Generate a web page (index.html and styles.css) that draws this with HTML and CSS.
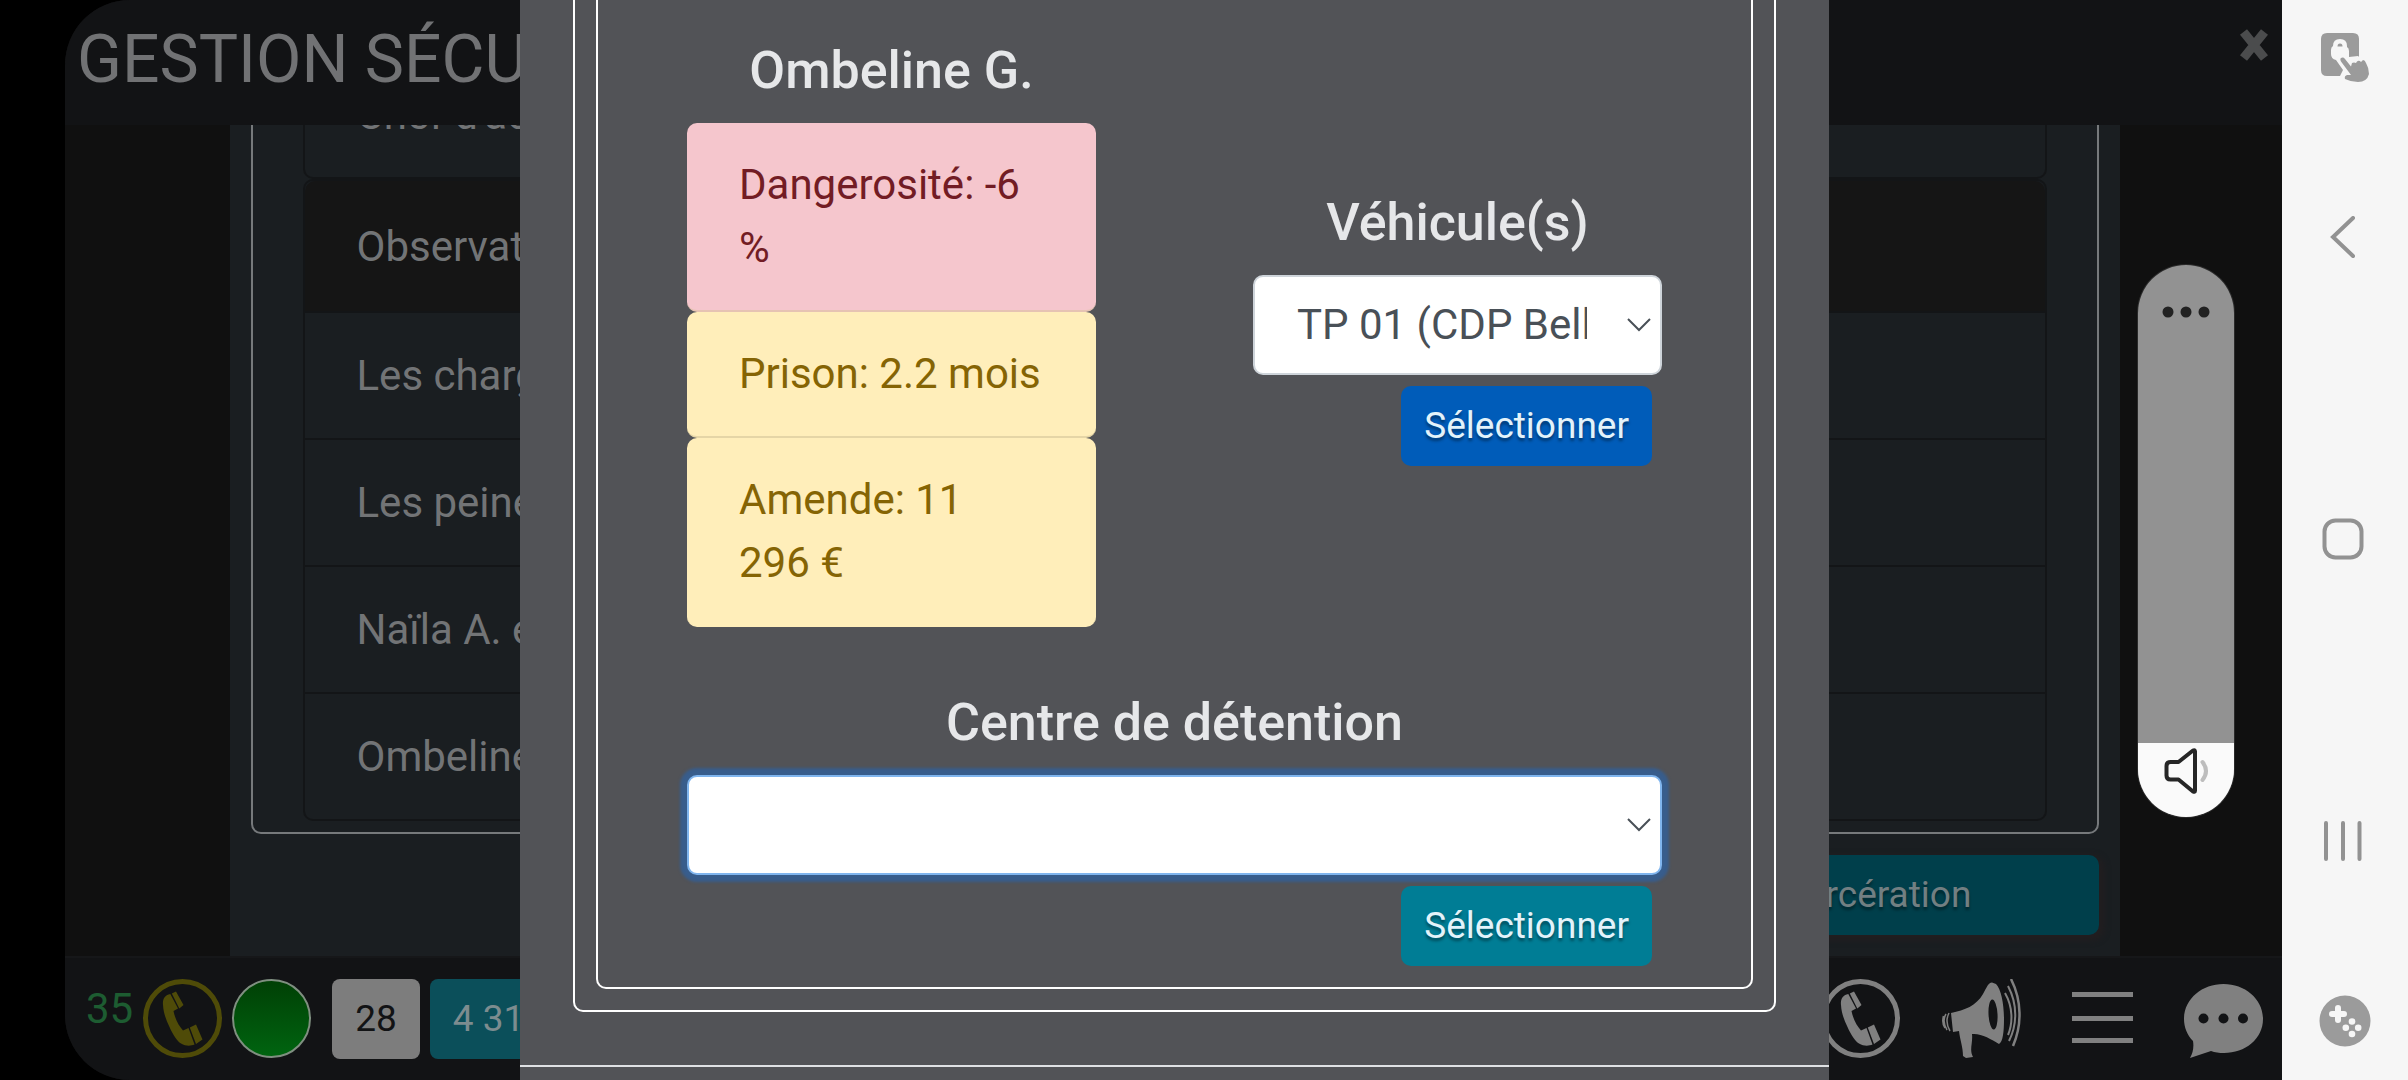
FILE: index.html
```html
<!DOCTYPE html>
<html lang="fr">
<head>
<meta charset="utf-8">
<title>Gestion sécurité</title>
<link rel="stylesheet" href="styles.css">
</head>
<body class="screen">
<svg class="sprite" aria-hidden="true">
  <symbol id="phone" viewBox="0 0 79 79">
    <circle cx="39.500" cy="39.500" r="37" fill="none" stroke="currentColor" stroke-width="5"/>
    <path fill="currentColor" d="M27.300 15C22 16 19.300 20 20 26C20.500 34 23 41 26.500 48C30 56 34 62 38 64.500C43 67.500 48 67 51.500 65.500L45.500 49L40 51.500C36 47 32 40 30.500 32L35 29.500Z"/>
    <path fill="currentColor" d="M28.800 14.500L33 12.500L40.500 26L36.300 29.500ZM46.800 48.500L53 45.500L59.500 60.500L53 65Z"/>
  </symbol>
</svg>

<div class="app">
  <header class="topbar">
    <h1 class="topbar-title">GESTION SÉCURITÉ</h1>
    <button class="topbar-close" type="button" aria-label="Fermer">
      <svg width="30" height="34" viewBox="0 0 30 34"><path d="M4.500 4L25.500 30M25.500 4L4.500 30" stroke="#4b4c4d" stroke-width="9" fill="none"/></svg>
    </button>
  </header>

  <main class="stage">
    <section class="panel">
      <div class="frame">
        <ul class="list">
          <li class="list-row">Chef d'accusation</li>
        </ul>
        <ul class="list">
          <li class="list-row list-row-active">Observations</li>
          <li class="list-row">Les charges</li>
          <li class="list-row">Les peines</li>
          <li class="list-row">Naïla A. et</li>
          <li class="list-row">Ombeline G.</li>
        </ul>
      </div>
      <button class="btn btn-jail" type="button">Incarcération</button>
    </section>
  </main>

  <footer class="dock">
    <div class="dock-group">
      <span class="dock-count">35</span>
      <button class="dock-icon dock-icon-call" type="button" aria-label="Appels"><svg><use href="#phone"/></svg></button>
      <span class="dock-status"></span>
      <span class="dock-badge">28</span>
      <span class="dock-badge dock-badge-credits">4 31</span>
    </div>
    <div class="dock-group dock-group-end">
      <button class="dock-icon" type="button" aria-label="Téléphone"><svg><use href="#phone"/></svg></button>
      <button class="dock-icon" type="button" aria-label="Annonces">
        <svg viewBox="0 0 79 79" fill="none" stroke="currentColor">
          <path fill="currentColor" stroke="none" d="M50 3.500C46 4 45 8 41 15C34 27 23 31 9 34L11 53L17 52C18 61 21 68 21 77L24 79L31 78C27 70 31 65 30 55C39 54 49 60 57 65C61 63 62 52 62 40C62 25 59 10 54 5Z"/>
          <ellipse cx="51" cy="35.500" rx="4.500" ry="15" transform="rotate(-3 51 35)" fill="#121315" stroke="none"/>
          <path stroke-width="1.500" d="M7 34C4 40 5 47 8 52M4 35C1 40 2 46 5 51M1.500 37C0 42 1 46 3 49"/>
          <path stroke-width="2" d="M63 14C71 28 71 44 66 56M66 7C76 26 75 46 67 62"/>
          <path stroke-width="2.500" d="M69 0C80 22 80 46 71 67"/>
        </svg>
      </button>
      <button class="dock-icon" type="button" aria-label="Menu">
        <svg viewBox="0 0 79 79"><path d="M9 15.500h61M9 39.500h61M9 61.500h61" stroke="currentColor" stroke-width="5"/></svg>
      </button>
      <button class="dock-icon" type="button" aria-label="Messages">
        <svg viewBox="0 0 79 79">
          <path fill="currentColor" d="M39.500 5C61 5 79 20 79 40S61 74 40 74C35 74 31 73.500 27 72L6 79C9 74 10 68 9 62C3 56 0 48 0 40C0 20 18 5 39.500 5Z"/>
          <g fill="#121315"><circle cx="19.500" cy="39.500" r="5"/><circle cx="39.500" cy="39.500" r="5"/><circle cx="59" cy="39.500" r="5"/></g>
        </svg>
      </button>
    </div>
  </footer>

  <div class="overlay">
    <div class="modal" role="dialog" aria-label="Incarcération">
      <div class="modal-body">
        <div class="modal-frame">
          <div class="card-frame">
            <div class="columns">
              <section class="column">
                <h2 class="heading">Ombeline G.</h2>
                <ul class="facts">
                  <li class="fact fact-danger">Dangerosité: -6 %</li>
                  <li class="fact">Prison: 2.2 mois</li>
                  <li class="fact">Amende: 11 296&nbsp;€</li>
                </ul>
              </section>
              <section class="column column-center">
                <label class="heading" for="vehicle">Véhicule(s)</label>
                <select class="select" id="vehicle"><option>TP 01 (CDP Bellevue)</option></select>
                <button class="btn btn-primary" type="button">Sélectionner</button>
              </section>
            </div>
            <section class="column">
              <label class="heading" for="center">Centre de détention</label>
              <select class="select select-focus" id="center"><option></option></select>
              <button class="btn btn-info" type="button">Sélectionner</button>
            </section>
          </div>
        </div>
      </div>
      <div class="modal-footer"></div>
    </div>
  </div>

  <div class="volume">
    <svg class="volume-dots" width="48" height="12" viewBox="0 0 48 12" fill="#222"><circle cx="6" cy="6" r="5.500"/><circle cx="24" cy="6" r="5.500"/><circle cx="42" cy="6" r="5.500"/></svg>
    <div class="volume-level">
      <svg width="46" height="46" viewBox="0 0 46 46" fill="none" stroke-linecap="round" stroke-linejoin="round" stroke-width="4">
        <path stroke="#262626" d="M2.500 18Q2.500 14 6.500 14H14.500L29 2.500Q31 1.500 31 3.500V42.500Q31 44.500 29 43.500L14.500 31.500H6.500Q2.500 31.500 2.500 27.500Z"/>
        <path stroke="#bdbdbd" d="M38.500 14Q45.500 23 38.500 32"/>
      </svg>
    </div>
  </div>
</div>

<nav class="sysbar">
  <button class="sys-btn" type="button" aria-label="Verrouillage tactile">
    <svg width="50" height="50" viewBox="0 0 50 50">
      <path fill="#9b9b9b" d="M7 0H33Q39 0 39 6V27L26 43H7Q1 43 1 37V6Q1 0 7 0Z"/>
      <path fill="#f6f6f6" d="M13 13Q13 6 20 6T27 13V14Q29 15 29 18V24L38 23L44 28L28 45H19L23 37L16 27Q11 26 11 21V17Q11 14 13 13Z"/>
      <path fill="#9b9b9b" d="M17.500 13.500Q17.500 10.500 20 10.500T22.500 13.500Z"/>
      <path fill="#9b9b9b" d="M20.500 25.500Q23 23.500 25 26L31 33.500L32 30Q34 29 36 30L37 28.500Q39 27 41 29L43 27Q45 27 46 30Q49 35 49 41Q47 49 38 49Q31 49 25 46Q24 43 27 42H31L21 28.500Q20 27 20.500 25.500Z"/>
    </svg>
  </button>
  <div class="sys-group">
    <button class="sys-btn" type="button" aria-label="Retour"><svg width="26" height="42" viewBox="0 0 26 42"><path d="M23 2L3 21L23 40" fill="none" stroke="#929292" stroke-width="4" stroke-linecap="round"/></svg></button>
    <button class="sys-btn" type="button" aria-label="Accueil"><svg width="42" height="42" viewBox="0 0 42 42"><rect x="2.500" y="2.500" width="37" height="37" rx="11" fill="none" stroke="#929292" stroke-width="4"/></svg></button>
    <button class="sys-btn" type="button" aria-label="Applications récentes"><svg width="42" height="42" viewBox="0 0 42 42"><path d="M4 3V39M21 3V39M37.500 3V39" stroke="#929292" stroke-width="4" stroke-linecap="round"/></svg></button>
  </div>
  <button class="sys-btn" type="button" aria-label="Jeux">
    <svg width="52" height="52" viewBox="0 0 52 52">
      <circle cx="26" cy="26" r="25.500" fill="#9b9b9b"/>
      <path d="M19 13V25M13 19H25" stroke="#f6f6f6" stroke-width="6" stroke-linecap="round"/>
      <g fill="#f6f6f6"><circle cx="33" cy="26.500" r="3.300"/><circle cx="33" cy="39" r="3.300"/><circle cx="26.800" cy="32.700" r="3.300"/><circle cx="39.200" cy="32.700" r="3.300"/></g>
    </svg>
  </button>
</nav>
</body>
</html>
```

FILE: styles.css
```css
*, *::before, *::after { box-sizing: border-box; }

.screen {
  margin: 0;
  height: 100vh;
  display: flex;
  overflow: hidden;
  padding-left: 65px;
  background: #000;
  font: 42px/63px Roboto, "Liberation Sans", sans-serif;
}

button, select { font-family: inherit; margin: 0; cursor: pointer; }
button { border: 0; background: none; padding: 0; }
ul { list-style: none; margin: 0; padding: 0; }
svg { display: block; }
.sprite { position: absolute; width: 0; height: 0; }

/* App shell */
.app {
  position: relative;
  flex: 1;
  min-width: 0;
  display: grid;
  grid-template-rows: 125px minmax(0, 1fr) auto;
  overflow: hidden;
  border-radius: 65px 0 0 65px;
  background: #101010;
}

.topbar {
  display: flex;
  justify-content: space-between;
  align-items: flex-start;
  padding: 28px 13px 0 12px;
  background: #121315;
  color: #717274;
}
.topbar-title { margin: 0; font-size: 66px; line-height: 64px; font-weight: 400; }

.stage {
  display: flex;
  justify-content: center;
  overflow: hidden;
  padding-left: 2px;
}
.panel {
  width: 1890px;
  padding: 0 21px 21px;
  display: flex;
  flex-direction: column;
  justify-content: flex-end;
  gap: 21px;
  background: #1a1e21;
}
.frame {
  flex: none;
  padding: 50px 50px 11px;
  border: 2px solid #76797b;
  border-radius: 10px;
  color: #727476;
}
.list { border: 2px solid #131517; border-radius: 10px; }
.list-row { padding: 31px 52px; border-top: 2px solid #131517; }
.list-row:first-child { border-top: 0; }
.list-row-active {
  padding: 34px 52px 33px;
  background: #151515;
  border-radius: 10px 10px 0 0;
}

/* Buttons */
.btn {
  padding: 10px 23px;
  border-radius: 10px;
  font-size: 37px;
  line-height: 60px;
  color: #e3f3fa;
  text-shadow: 0 3px 3px rgba(0, 0, 0, .4);
}
.btn-jail {
  align-self: flex-end;
  width: 470px;
  background: #003f4b;
  color: #727f82;
  box-shadow: 3px 3px 6px 2px #221e20;
}
.btn-primary { background: #005cb9; }
.btn-info { background: #007d95; }

/* Dock */
.dock {
  display: flex;
  justify-content: space-between;
  padding: 21px 19px 21px 21px;
  border-top: 2px solid #161719;
  background: #121315;
  color: #808080;
}
.dock-group { display: flex; gap: 10px; }
.dock-group-end { gap: 42px; }
.dock-count { line-height: 60px; color: #1d5c31; }
.dock-icon { width: 79px; height: 79px; color: #808080; }
.dock-icon svg { width: 79px; height: 79px; }
.dock-icon-call { color: #4f4b08; }
.dock-status {
  width: 79px;
  height: 79px;
  margin-right: 11px;
  border: 2px solid #7f8f80;
  border-radius: 50%;
  background: linear-gradient(#004005, #006410);
}
.dock-badge {
  height: 80px;
  padding: 0 23px;
  border-radius: 8px;
  background: #7d7d7d;
  color: #121315;
  font-size: 37px;
  line-height: 80px;
}
.dock-badge-credits { background: #0b4f5a; color: #7d8c8f; }

/* Modal */
.overlay {
  position: absolute;
  inset: 0;
  padding-left: 2px;
  display: flex;
  justify-content: center;
}
.modal {
  width: 1309px;
  display: flex;
  flex-direction: column;
  background: #525357;
  color: #e6e7e9;
}
.modal-body { padding: 0 53px 53px; }
.modal-frame {
  padding: 0 21px 21px;
  border: 2px solid #fff;
  border-top: 0;
  border-radius: 0 0 10px 10px;
}
.card-frame {
  padding: 39px 89px 11px;
  border: 2px solid #fff;
  border-top: 0;
  border-radius: 0 0 10px 10px;
  display: flex;
  flex-direction: column;
  gap: 64px;
}
.modal-footer { flex: 1; border-top: 2px solid #dfe1e4; }

.columns {
  display: grid;
  grid-template-columns: 1fr 1fr;
  gap: 157px;
}
.column { display: flex; flex-direction: column; min-width: 0; }
.column-center { justify-content: center; }
.column .btn { align-self: flex-end; margin: 11px 10px 10px; }
.heading {
  margin: 0 0 21px;
  font-size: 52px;
  line-height: 63px;
  font-weight: 500;
  text-align: center;
}

.fact {
  padding: 30px 52px 31px;
  border-bottom: 2px solid #e5d5a6;
  border-radius: 10px;
  background: #ffeeba;
  color: #856404;
}
.fact:last-child { border-bottom-color: #ffeeba; }
.fact-danger { background: #f5c6cd; color: #721c24; border-bottom-color: #e6c3b3; }

.select {
  appearance: none;
  width: 100%;
  height: 100px;
  padding: 0 73px 0 42px;
  border: 2px solid #ced4da;
  border-radius: 10px;
  background: #fff url("data:image/svg+xml,%3Csvg xmlns='http://www.w3.org/2000/svg' width='24' height='14' viewBox='0 0 24 14'%3E%3Cpath d='M1 1L12 12L23 1' fill='none' stroke='%23495057' stroke-width='2'/%3E%3C/svg%3E") no-repeat right 9px center;
  color: #495057;
  font-size: 42px;
  outline: 0;
}
.select-focus {
  border-color: #80b5ee;
  box-shadow: 0 0 3px 7px #385d8c;
}

/* Volume slider */
.volume {
  position: absolute;
  top: 265px;
  right: 48px;
  width: 96px;
  height: 552px;
  display: flex;
  flex-direction: column;
  justify-content: space-between;
  align-items: center;
  overflow: hidden;
  padding-top: 41px;
  border-radius: 48px;
  background: #929292;
  box-shadow: 0 0 0 1px #2a2a2a;
}
.volume-level {
  width: 100%;
  height: 74px;
  padding: 5px 26px;
  background: #fafafa;
}

/* Android navigation bar */
.sysbar {
  width: 126px;
  display: flex;
  flex-direction: column;
  justify-content: space-between;
  align-items: center;
  padding: 33px 0;
  background: #f6f6f6;
}
.sys-group {
  display: flex;
  flex-direction: column;
  align-items: center;
  gap: 260px;
  padding-right: 5px;
}
```
